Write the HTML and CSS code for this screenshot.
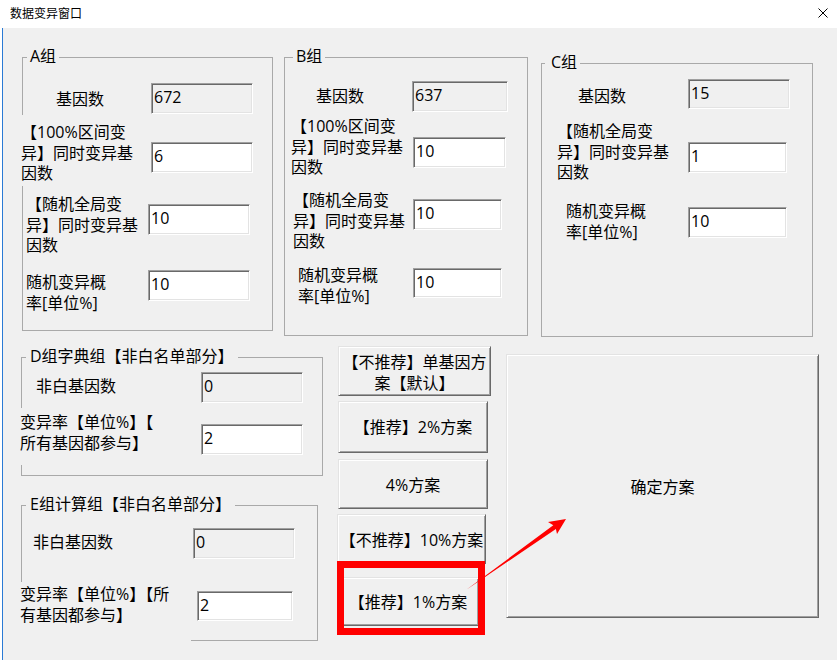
FILE: index.html
```html
<!DOCTYPE html>
<html lang="zh">
<head>
<meta charset="utf-8">
<title>数据变异窗口</title>
<link rel="stylesheet" href="styles.css">
</head>
<body>
<div class="titlebar">
  <span class="title">数据变异窗口</span>
  <svg class="close" width="10" height="10" viewBox="0 0 10 10"><path d="M0.5 0.5 L9.5 9.5 M9.5 0.5 L0.5 9.5" stroke="#000" stroke-width="1" fill="none"/></svg>
</div>
<div class="client">
  <div class="top-row">
    <div class="group group-a">
      <span class="legend lg-a">A组</span>
      <div class="row a1"><span class="lbl">基因数</span><input class="field ro w102" value="672" readonly></div>
      <div class="row a2"><span class="lbl mask">【100%区间变<br>异】同时变异基<br>因数</span><input class="field w102" value="6"></div>
      <div class="row a3"><span class="lbl">【随机全局变<br>异】同时变异基<br>因数</span><input class="field w102" value="10"></div>
      <div class="row a4"><span class="lbl">随机变异概<br>率[单位%]</span><input class="field w102" value="10"></div>
    </div>
    <div class="group group-b">
      <span class="legend lg-b">B组</span>
      <div class="row b1"><span class="lbl">基因数</span><input class="field ro" value="637" readonly></div>
      <div class="row b2"><span class="lbl">【100%区间变<br>异】同时变异基<br>因数</span><input class="field" value="10"></div>
      <div class="row b3"><span class="lbl">【随机全局变<br>异】同时变异基<br>因数</span><input class="field" value="10"></div>
      <div class="row b4"><span class="lbl">随机变异概<br>率[单位%]</span><input class="field" value="10"></div>
    </div>
    <div class="group group-c">
      <span class="legend lg-c">C组</span>
      <div class="row c1"><span class="lbl">基因数</span><input class="field ro" value="15" readonly></div>
      <div class="row c2"><span class="lbl">【随机全局变<br>异】同时变异基<br>因数</span><input class="field" value="1"></div>
      <div class="row c3"><span class="lbl">随机变异概<br>率[单位%]</span><input class="field" value="10"></div>
    </div>
  </div>
  <div class="bottom-row">
    <div class="left-col">
      <div class="group group-d">
        <span class="legend lg-d">D组字典组【非白名单部分】</span>
        <div class="row d1"><span class="lbl">非白基因数</span><input class="field ro w102" value="0" readonly></div>
        <div class="row d2"><span class="lbl mask">变异率【单位%】【<br>所有基因都参与】</span><input class="field w102" value="2"></div>
      </div>
      <div class="group group-e">
        <span class="legend lg-d">E组计算组【非白名单部分】</span>
        <div class="row e1"><span class="lbl">非白基因数</span><input class="field ro w102" value="0" readonly></div>
        <div class="row e2"><span class="lbl mask">变异率【单位%】【所<br>有基因都参与】</span><input class="field" value="2"></div>
      </div>
    </div>
    <div class="btn-col">
      <button class="btn bt1">【不推荐】单基因方<br>案【默认】</button>
      <button class="btn bt2">【推荐】2%方案</button>
      <button class="btn bt3">4%方案</button>
      <button class="btn bt4">【不推荐】10%方案</button>
      <button class="btn bt5">【推荐】1%方案</button>
    </div>
    <button class="btn confirm">确定方案</button>
  </div>
</div>
<svg class="annot" width="837" height="660" viewBox="0 0 837 660">
  <rect x="340.5" y="564.5" width="141" height="67" fill="none" stroke="#ff0000" stroke-width="7"/>
  <polygon points="466,590 555.9,528.9 557,534 566,519 548,522 553.3,525.3" fill="#ff0000"/>
</svg>
</body>
</html>
```
FILE: styles.css
```css
* { box-sizing: border-box; }
html, body { margin: 0; padding: 0; }
body {
  position: relative;
  width: 837px;
  height: 660px;
  overflow: hidden;
  background: #f0f0f0;
  font-family: "Open Sans", "Noto Sans CJK SC", sans-serif;
  font-size: 16px;
  color: #000;
}

.titlebar {
  height: 28px;
  background: #fff;
  display: flex;
  align-items: center;
  justify-content: space-between;
  padding: 0 9px 2px 10px;
}
.title {
  font-family: "Noto Sans CJK SC", sans-serif;
  font-size: 12px;
  line-height: 16px;
}
.close { display: block; }

.client {
  height: 632px;
  box-shadow: inset 2px 0 #fff, inset 3px 0 #2a7ad5;
}

.top-row, .bottom-row {
  display: flex;
  align-items: flex-start;
}

.group {
  position: relative;
  flex: none;
  border: 1px solid #a9a9a9;
}
.legend {
  position: absolute;
  top: -12px;
  background: #f0f0f0;
  line-height: 20.5px;
  white-space: nowrap;
  padding: 0 3px;
}
.lg-a { left: 4px; }
.lg-b { left: 8px; }
.lg-c { left: 3px; padding-left: 6px; }
.lg-d { left: 4px; padding: 0 4px; }

.group-a { margin: 29px 0 0 22px; width: 251px; height: 274px; }
.group-b { margin: 29px 0 0 11px; width: 244px; height: 279px; }
.group-c { margin: 35px 0 0 13px; width: 272px; height: 274px; }

.row {
  display: flex;
  align-items: flex-start;
}
.lbl {
  flex: none;
  display: block;
  line-height: 20.5px;
  white-space: nowrap;
}
.mask { background: #f0f0f0; }

.field {
  flex: none;
  display: block;
  height: 31px;
  width: 89px;
  margin: 0;
  padding: 0 0 3px 2px;
  font: inherit;
  color: #000;
  background: #fff;
  border: 1px solid;
  border-color: #a0a0a0 #fff #fff #a0a0a0;
  box-shadow: inset 1px 1px #696969, inset -1px -1px #e3e3e3;
  outline: none;
}
.field.ro { background: #f0f0f0; }
.w102 { width: 102px; }

/* group A */
.a1 { margin-top: 25px; }
.a1 .lbl { margin: 6px 0 0 33px; width: 95px; }
.a2 { margin-top: 1px; }
.a2 .lbl { margin-left: -2px; width: 130px; height: 71px; padding-top: 7px; }
.a2 .field { margin-top: 27px; }
.a3 { margin-top: 8px; }
.a3 .lbl { margin-left: 3px; width: 122px; }
.a3 .field { margin-top: 10px; }
.a4 { margin-top: 14.5px; }
.a4 .lbl { margin: 2px 0 0 3px; width: 122px; }

/* group B */
.b1 { margin-top: 23px; }
.b1 .lbl { margin: 5px 0 0 31px; width: 96px; }
.b1 .field { width: 96px; }
.b2 { margin-top: 4px; }
.b2 .lbl { margin-left: 6px; width: 122px; }
.b2 .field { margin-top: 21px; width: 93px; }
.b3 { margin-top: 12.5px; }
.b3 .lbl { margin-left: 8px; width: 120px; }
.b3 .field { margin-top: 9px; }
.b4 { margin-top: 13.5px; }
.b4 .lbl { margin-left: 13px; width: 115px; }
.b4 .field { margin-top: 3px; height: 30px; }

/* group C */
.c1 { margin-top: 15px; }
.c1 .lbl { margin: 7px 0 0 36px; width: 110px; }
.c1 .field { width: 102px; height: 30px; }
.c2 { margin-top: 12px; }
.c2 .lbl { margin-left: 15px; width: 131px; }
.c2 .field { margin-top: 21px; width: 99px; }
.c3 { margin-top: 18.5px; }
.c3 .lbl { margin-left: 24px; width: 122px; }
.c3 .field { margin-top: 6px; width: 99px; }

/* left column */
.left-col {
  flex: none;
  display: flex;
  flex-direction: column;
  align-items: flex-start;
  margin-left: 21px;
  width: 302px;
}
.group-d { margin-top: 20px; width: 302px; height: 119px; }
.group-e { margin-top: 29px; width: 297px; height: 136px; }

.d1 { margin-top: 14px; }
.d1 .lbl { margin: 4px 0 0 14px; width: 165px; }
.d2 { margin-top: 5px; }
.d2 .lbl { margin-left: -2px; width: 181px; height: 57px; padding-top: 4px; }
.d2 .field { margin-top: 16px; }

.e1 { margin-top: 22px; }
.e1 .lbl { margin: 4px 0 0 11px; width: 160px; }
.e2 { margin-top: 23px; }
.e2 .lbl { margin-left: -2px; width: 171px; height: 64px; padding-top: 2px; }
.e2 .field { margin: 9px 0 0 6px; width: 96px; height: 30px; }

/* buttons */
.btn-col {
  flex: none;
  display: flex;
  flex-direction: column;
  align-items: flex-start;
  margin: 9px 0 0 15px;
}
.btn {
  flex: none;
  margin: 0;
  padding: 0;
  font: inherit;
  line-height: 21px;
  color: #000;
  text-align: center;
  background: #f0f0f0;
  border: 1px solid;
  border-color: #e3e3e3 #696969 #696969 #e3e3e3;
  box-shadow: inset 1px 1px #fff, inset -1px -1px #a0a0a0;
}
.bt1 { width: 153px; height: 50px; padding-top: 3px; }
.bt2 { margin-top: 5px; width: 150px; height: 52px; }
.bt3 { margin-top: 6px; width: 150px; height: 50px; padding-top: 2px; }
.bt4 { margin: 5px 0 0 -1px; width: 149px; height: 50px; padding-top: 2px; }
.bt5 { margin: 13px 0 0 -1px; width: 142px; height: 49px; padding-top: 2px; }

.confirm {
  margin: 17px 0 0 15px;
  width: 313px;
  height: 264px;
  padding-top: 2px;
}

.annot {
  position: absolute;
  left: 0;
  top: 0;
  pointer-events: none;
}
```
